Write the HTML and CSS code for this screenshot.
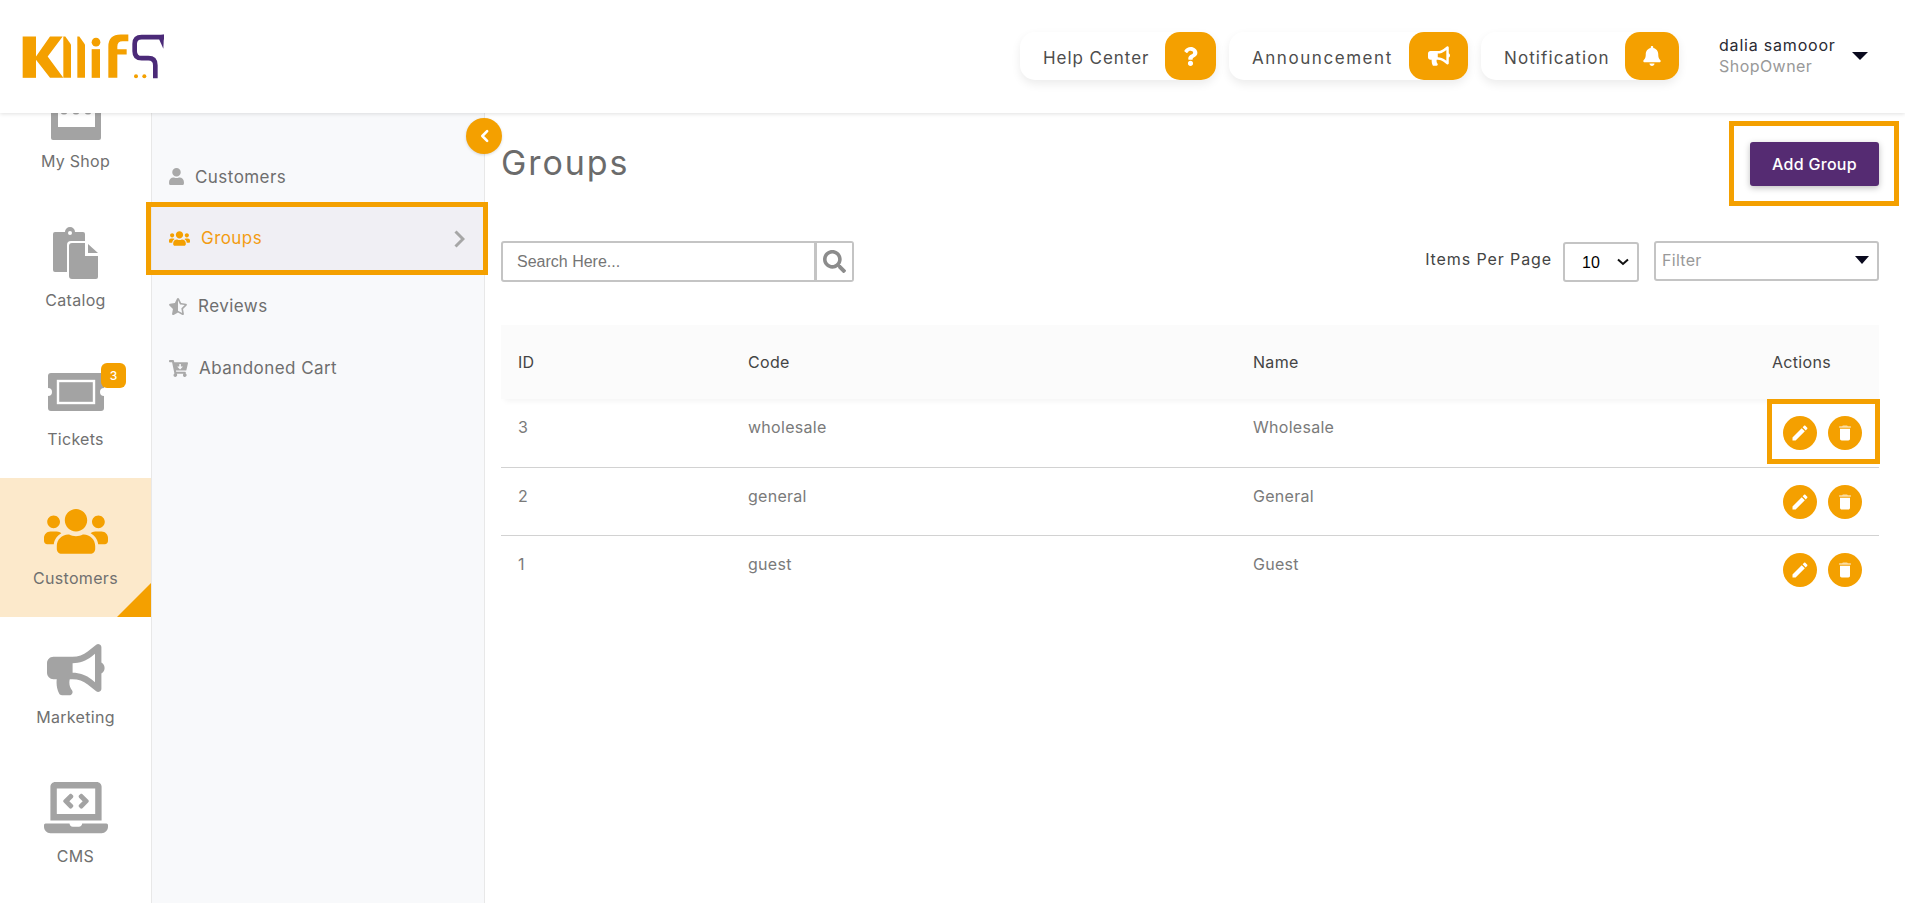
FILE: index.html
```html
<!DOCTYPE html>
<html lang="en">
<head>
<meta charset="utf-8">
<title>Groups</title>
<link rel="stylesheet" href="styles.css">
</head>
<body>
<div class="app">
  <header class="topbar">
    <svg class="logo" viewBox="60 79.5 480 180" aria-label="Klilf5 logo">
      <g fill="#f4a000">
        <rect x="68" y="108" width="40" height="124"/>
        <polygon points="108,168 150,108 188,108 143,168 190,232 150,232 108,178"/>
        <polygon points="190,108 196,108 213,132 213,232 190,232"/>
        <polygon points="232,108 238,108 255,132 255,232 232,232"/>
        <circle cx="288" cy="125" r="13"/>
        <rect x="275" y="146" width="25" height="86"/>
        <path d="M325 232V138Q325 102 362 102H385V122H368Q352 122 352 138V146H380V162H352V232Z"/>
        <circle cx="408" cy="227" r="6"/>
        <circle cx="433" cy="227" r="6"/>
      </g>
      <path d="M492 110H425Q404 110 404 130V152Q404 173 425 173H445Q466 173 466 194V233" fill="none" stroke="#4b2a78" stroke-width="14"/>
      <polygon points="478,104 492,102 490,145 478,118" fill="#4b2a78"/>
    </svg>
    <nav class="top-actions">
      <a class="pill pill-help"><span>Help Center</span><i class="pill-icon"><svg viewBox="0 0 384 512"><path d="M202.021 0C122.202 0 70.503 32.703 29.914 91.026c-7.363 10.58-5.093 25.086 5.178 32.874l43.138 32.709c10.373 7.865 25.132 6.026 33.253-4.148 25.049-31.381 43.63-49.449 82.757-49.449 30.764 0 68.816 19.799 68.816 49.631 0 22.552-18.617 34.134-48.993 51.164-35.423 19.86-82.299 44.576-82.299 106.405V320c0 13.255 10.745 24 24 24h72.471c13.255 0 24-10.745 24-24v-5.773c0-42.86 125.268-44.645 125.268-160.627C377.504 66.256 286.902 0 202.021 0zM192 373.459c-38.196 0-69.271 31.075-69.271 69.271 0 38.195 31.075 69.27 69.271 69.27s69.271-31.075 69.271-69.271-31.075-69.27-69.271-69.27z"/></svg></i></a>
      <a class="pill pill-ann"><span>Announcement</span><i class="pill-icon"><svg viewBox="0 0 576 512"><path d="M576 240c0-23.63-12.95-44.04-32-55.12V32.01C544 23.26 537.02 0 512 0c-7.12 0-14.19 2.38-19.98 7.02l-85.03 68.03C364.28 109.19 310.66 128 256 128H64c-35.35 0-64 28.65-64 64v96c0 35.35 28.65 64 64 64h33.7c-1.39 10.48-2.18 21.14-2.18 32 0 39.77 9.26 77.35 25.56 110.94 5.19 10.69 16.52 17.06 28.4 17.06h74.28c26.05 0 41.69-29.84 25.9-50.56-16.4-21.52-26.15-48.36-26.15-77.44 0-11.11 1.62-21.79 4.41-32H256c54.66 0 108.28 18.81 150.98 52.95l85.03 68.03a32.023 32.023 0 0 0 19.98 7.02c24.92 0 32-22.78 32-32V295.13C563.05 284.04 576 263.63 576 240zm-96 141.42l-33.05-26.44C392.95 311.78 325.12 288 256 288v-96c69.12 0 136.95-23.78 190.95-66.98L480 98.58v282.84z"/></svg></i></a>
      <a class="pill pill-note"><span>Notification</span><i class="pill-icon"><svg viewBox="0 0 448 512"><path d="M224 512c35.32 0 63.97-28.65 63.97-64H160.03c0 35.35 28.65 64 63.97 64zm215.39-149.71c-19.32-20.76-55.47-51.99-55.47-154.29 0-77.7-54.48-139.9-127.94-155.16V32c0-17.67-14.32-32-31.98-32s-31.98 14.33-31.98 32v20.84C118.56 68.1 64.08 130.3 64.08 208c0 102.3-36.15 133.53-55.47 154.29-6 6.45-8.66 14.16-8.61 21.71.11 16.4 12.98 32 32.1 32h383.8c19.12 0 32-15.6 32.1-32 .05-7.55-2.61-15.27-8.61-21.71z"/></svg></i></a>
      <div class="user">
        <div class="user-text"><div class="user-name">dalia samooor</div><div class="user-role">ShopOwner</div></div>
        <span class="caret"></span>
      </div>
    </nav>
  </header>

  <div class="body-row">
    <aside class="rail">
      <ul class="rail-list">
        <li class="rail-item">
          <svg class="rail-icon" viewBox="0 0 64 64"><path d="M7 28h50v28a2 2 0 0 1-2 2H9a2 2 0 0 1-2-2z"/><rect x="14" y="20" width="37" height="25" fill="#fff"/><g><circle cx="10" cy="29" r="3.6"/><circle cx="20" cy="29" r="3.6"/><circle cx="32" cy="29" r="3.6"/><circle cx="44" cy="29" r="3.6"/><circle cx="54" cy="29" r="3.6"/></g></svg>
          <span class="rail-label">My Shop</span>
        </li>
        <li class="rail-item">
          <svg class="rail-icon" viewBox="0 0 64 64"><path d="M11 11h10a5 5 0 0 1 10 0h8a2 2 0 0 1 2 2v38H11a2 2 0 0 1-2-2V13a2 2 0 0 1 2-2z"/><circle cx="26" cy="12" r="2" fill="#fff"/><path d="M27 20h17l12 12v28H27a4 4 0 0 1-4-4V24a4 4 0 0 1 4-4z" fill="#fff"/><path d="M28 22h13v13h13v21a2 2 0 0 1-2 2H28a3 3 0 0 1-3-3V25a3 3 0 0 1 3-3z"/><path d="M44 23l10 9H44z"/></svg>
          <span class="rail-label">Catalog</span>
        </li>
        <li class="rail-item">
          <svg class="rail-icon" viewBox="0 0 64 64"><path d="M7 13h50a3 3 0 0 1 3 3v12a4 4 0 0 0 0 8v12a3 3 0 0 1-3 3H7a3 3 0 0 1-3-3V36a4 4 0 0 0 0-8V16a3 3 0 0 1 3-3z"/><rect x="14" y="21" width="36" height="22" fill="none" stroke="#fff" stroke-width="2.4"/></svg>
          <span class="rail-label">Tickets</span>
          <b class="rail-badge">3</b>
        </li>
        <li class="rail-item is-active">
          <svg class="rail-icon" viewBox="0 -68 640 640"><path d="M96 224c35.3 0 64-28.7 64-64s-28.7-64-64-64-64 28.7-64 64 28.7 64 64 64zm448 0c35.3 0 64-28.7 64-64s-28.7-64-64-64-64 28.7-64 64 28.7 64 64 64zm32 32h-64c-17.6 0-33.5 7.1-45.1 18.6 40.3 22.1 68.9 62 75.1 109.4h66c17.7 0 32-14.3 32-32v-32c0-35.3-28.7-64-64-64zm-256 0c61.9 0 112-50.1 112-112S381.9 32 320 32 208 82.1 208 144s50.1 112 112 112zm76.8 32h-8.3c-20.8 10-43.9 16-68.5 16s-47.6-6-68.5-16h-8.3C179.6 288 128 339.6 128 403.2V432c0 26.5 21.5 48 48 48h288c26.5 0 48-21.5 48-48v-28.8c0-63.6-51.6-115.2-115.2-115.2zm-223.7-13.4C161.5 263.1 145.6 256 128 256H64c-35.3 0-64 28.7-64 64v32c0 17.7 14.3 32 32 32h65.9c6.3-47.4 34.9-87.3 75.2-109.4z"/></svg>
          <span class="rail-label">Customers</span>
        </li>
        <li class="rail-item">
          <svg class="rail-icon" viewBox="-30 -60 640 640"><path d="M576 240c0-23.63-12.95-44.04-32-55.12V32.01C544 23.26 537.02 0 512 0c-7.12 0-14.19 2.38-19.98 7.02l-85.03 68.03C364.28 109.19 310.66 128 256 128H64c-35.35 0-64 28.65-64 64v96c0 35.35 28.65 64 64 64h33.7c-1.39 10.48-2.18 21.14-2.18 32 0 39.77 9.26 77.35 25.56 110.94 5.19 10.69 16.52 17.06 28.4 17.06h74.28c26.05 0 41.69-29.84 25.9-50.56-16.4-21.52-26.15-48.36-26.15-77.44 0-11.11 1.62-21.79 4.41-32H256c54.66 0 108.28 18.81 150.98 52.95l85.03 68.03a32.023 32.023 0 0 0 19.98 7.02c24.92 0 32-22.78 32-32V295.13C563.05 284.04 576 263.63 576 240zm-96 141.42l-33.05-26.44C392.95 311.78 325.12 288 256 288v-96c69.12 0 136.95-23.78 190.95-66.98L480 98.58v282.84z"/></svg>
          <span class="rail-label">Marketing</span>
        </li>
        <li class="rail-item">
          <svg class="rail-icon" viewBox="0 -50 640 640"><path d="M255.03 261.65c6.25 6.25 16.38 6.25 22.63 0l11.31-11.31c6.25-6.25 6.25-16.38 0-22.63L253.25 192l35.71-35.72c6.25-6.25 6.25-16.38 0-22.63l-11.31-11.31c-6.25-6.25-16.38-6.25-22.63 0l-58.34 58.34c-6.25 6.25-6.25 16.38 0 22.63l58.35 58.34zm96.01-11.3l11.31 11.31c6.25 6.25 16.38 6.25 22.63 0l58.34-58.34c6.25-6.25 6.25-16.38 0-22.63l-58.34-58.34c-6.25-6.25-16.38-6.25-22.63 0l-11.31 11.31c-6.25 6.25-6.25 16.38 0 22.63L386.75 192l-35.71 35.72c-6.25 6.25-6.25 16.38 0 22.63zM624 416H381.54c-.74 19.81-14.71 32-32.74 32H288c-18.69 0-33.02-17.47-32.77-32H16c-8.8 0-16 7.2-16 16v16c0 35.2 28.8 64 64 64h512c35.2 0 64-28.8 64-64v-16c0-8.8-7.2-16-16-16zM576 48c0-26.4-21.6-48-48-48H112C85.6 0 64 21.6 64 48v336h512V48zm-64 272H128V64h384v256z"/></svg>
          <span class="rail-label">CMS</span>
        </li>
      </ul>
    </aside>

    <aside class="subnav">
      <button class="collapse" type="button" aria-label="Collapse"><svg viewBox="0 0 12 16"><path d="M9 2.5 3.5 8 9 13.5" fill="none" stroke="#fff" stroke-width="3" stroke-linecap="round" stroke-linejoin="round"/></svg></button>
      <ul class="subnav-list">
        <li class="sub-item sub-customers">
          <svg class="sub-icon ic-user" viewBox="0 0 448 512"><path d="M224 256c70.7 0 128-57.3 128-128S294.7 0 224 0 96 57.3 96 128s57.3 128 128 128zm89.6 32h-16.7c-22.2 10.2-46.9 16-72.9 16s-50.6-5.8-72.9-16h-16.7C60.2 288 0 348.2 0 422.4V464c0 26.5 21.5 48 48 48h352c26.5 0 48-21.5 48-48v-41.6c0-74.2-60.2-134.4-134.4-134.4z"/></svg>
          <span>Customers</span>
        </li>
        <li class="sub-item sub-groups">
          <svg class="sub-icon ic-users" viewBox="0 32 640 448"><path d="M96 224c35.3 0 64-28.7 64-64s-28.7-64-64-64-64 28.7-64 64 28.7 64 64 64zm448 0c35.3 0 64-28.7 64-64s-28.7-64-64-64-64 28.7-64 64 28.7 64 64 64zm32 32h-64c-17.6 0-33.5 7.1-45.1 18.6 40.3 22.1 68.9 62 75.1 109.4h66c17.7 0 32-14.3 32-32v-32c0-35.3-28.7-64-64-64zm-256 0c61.9 0 112-50.1 112-112S381.9 32 320 32 208 82.1 208 144s50.1 112 112 112zm76.8 32h-8.3c-20.8 10-43.9 16-68.5 16s-47.6-6-68.5-16h-8.3C179.6 288 128 339.6 128 403.2V432c0 26.5 21.5 48 48 48h288c26.5 0 48-21.5 48-48v-28.8c0-63.6-51.6-115.2-115.2-115.2zm-223.7-13.4C161.5 263.1 145.6 256 128 256H64c-35.3 0-64 28.7-64 64v32c0 17.7 14.3 32 32 32h65.9c6.3-47.4 34.9-87.3 75.2-109.4z"/></svg>
          <span>Groups</span>
          <svg class="sub-chevron" viewBox="0 0 11 18"><path d="M1.5 1.5 9 9l-7.5 7.5" fill="none" stroke="#a6a6a6" stroke-width="3"/></svg>
        </li>
        <li class="sub-item sub-reviews">
          <svg class="sub-icon ic-star" viewBox="0 0 536 512"><path d="M508.55 171.51L362.18 150.2 296.77 17.81C290.89 5.98 279.42 0 267.95 0c-11.4 0-22.79 5.9-28.69 17.81l-65.43 132.38-146.38 21.29c-26.25 3.8-36.77 36.09-17.74 54.59l105.89 103-25.06 145.48C86.98 495.33 103.57 512 122.15 512c4.93 0 10-1.17 14.87-3.75l130.95-68.68 130.94 68.7c4.86 2.55 9.92 3.71 14.83 3.71 18.6 0 35.22-16.61 31.66-37.4l-25.03-145.49 105.91-102.98c19.04-18.5 8.52-50.8-17.73-54.6zm-121.74 123.2l-18.12 17.62 4.28 24.88 19.52 113.45-102.13-53.59-22.38-11.74.03-317.19 51.03 103.29 11.18 22.63 25.01 3.64 114.23 16.63-82.65 80.38z"/></svg>
          <span>Reviews</span>
        </li>
        <li class="sub-item sub-cart">
          <svg class="sub-icon ic-cart" viewBox="0 0 576 512"><path d="M504.717 320H211.572l6.545 32h268.418c15.401 0 26.816 14.301 23.403 29.319l-5.517 24.276C523.112 414.668 536 433.828 536 456c0 31.202-25.519 56.444-56.824 55.994-29.823-.429-54.35-24.631-55.155-54.447-.44-16.287 6.085-31.049 16.803-41.548H231.176c10.378 10.166 16.824 24.333 16.824 40 0 31.81-26.528 57.42-58.67 55.938-28.54-1.314-51.751-24.374-53.251-52.904-1.158-22.031 10.436-41.434 28.051-51.564L93.412 64H24C10.745 64 0 53.255 0 40V24C0 10.745 10.745 0 24 0h102.529c11.401 0 21.228 8.021 23.513 19.19L159.208 64H551.99c15.401 0 26.816 14.301 23.403 29.319l-47.273 208C525.637 312.246 515.923 320 504.717 320zM403.029 192H360v-60c0-6.627-5.373-12-12-12h-24c-6.627 0-12 5.373-12 12v60h-43.029c-10.691 0-16.045 12.926-8.485 20.485l67.029 67.029c4.686 4.686 12.284 4.686 16.971 0l67.029-67.029c7.559-7.559 2.205-20.485-8.486-20.485z"/></svg>
          <span>Abandoned Cart</span>
        </li>
      </ul>
    </aside>

    <main class="content">
      <div class="title-row">
        <h1 class="page-title">Groups</h1>
        <button class="add-btn" type="button">Add Group</button>
      </div>

      <div class="toolbar">
        <form class="search">
          <input class="search-input" type="text" placeholder="Search Here...">
          <button class="search-btn" type="button" aria-label="Search"><svg viewBox="0 0 512 512"><path d="M505 442.7L405.3 343c-4.5-4.5-10.6-7-17-7H372c27.6-35.3 44-79.7 44-128C416 93.1 322.9 0 208 0S0 93.1 0 208s93.1 208 208 208c48.3 0 92.7-16.4 128-44v16.3c0 6.4 2.5 12.5 7 17l99.7 99.7c9.4 9.4 24.6 9.4 33.9 0l28.3-28.3c9.4-9.4 9.4-24.6.1-34zM208 336c-70.7 0-128-57.2-128-128 0-70.7 57.2-128 128-128 70.7 0 128 57.2 128 128 0 70.7-57.2 128-128 128z"/></svg></button>
        </form>
        <div class="filters">
          <label class="per-page-label">Items Per Page</label>
          <div class="per-page-wrap">
            <select class="per-page"><option>10</option><option>25</option><option>50</option></select>
            <svg class="per-page-chevron" viewBox="0 0 12 8"><path d="M1 1.5 6 6l5-4.5" fill="none" stroke="#111" stroke-width="2"/></svg>
          </div>
          <div class="filter"><span>Filter</span><i class="filter-caret"></i></div>
        </div>
      </div>

      <table class="grid">
        <thead>
          <tr><th class="col-id">ID</th><th class="col-code">Code</th><th class="col-name">Name</th><th class="col-actions">Actions</th></tr>
        </thead>
        <tbody>
          <tr class="row-first">
            <td>3</td><td>wholesale</td><td>Wholesale</td>
            <td class="cell-actions"><div class="actions is-marked">
              <button class="round" type="button" aria-label="Edit"><svg viewBox="0 0 24 24"><path d="M3 17.25V21h3.75L17.81 9.94l-3.75-3.75L3 17.25zM20.71 7.04c.39-.39.39-1.02 0-1.41l-2.34-2.34c-.39-.39-1.02-.39-1.41 0l-1.83 1.83 3.75 3.75 1.83-1.83z"/></svg></button>
              <button class="round" type="button" aria-label="Delete"><svg viewBox="0 0 24 24"><path d="M6 19c0 1.1.9 2 2 2h8c1.1 0 2-.9 2-2V7H6v12z"/><path d="M19 4h-3.5l-1-1h-5l-1 1H5v1.6h14z" opacity=".65"/></svg></button>
            </div></td>
          </tr>
          <tr>
            <td>2</td><td>general</td><td>General</td>
            <td class="cell-actions"><div class="actions">
              <button class="round" type="button" aria-label="Edit"><svg viewBox="0 0 24 24"><path d="M3 17.25V21h3.75L17.81 9.94l-3.75-3.75L3 17.25zM20.71 7.04c.39-.39.39-1.02 0-1.41l-2.34-2.34c-.39-.39-1.02-.39-1.41 0l-1.83 1.83 3.75 3.75 1.83-1.83z"/></svg></button>
              <button class="round" type="button" aria-label="Delete"><svg viewBox="0 0 24 24"><path d="M6 19c0 1.1.9 2 2 2h8c1.1 0 2-.9 2-2V7H6v12z"/><path d="M19 4h-3.5l-1-1h-5l-1 1H5v1.6h14z" opacity=".65"/></svg></button>
            </div></td>
          </tr>
          <tr>
            <td>1</td><td>guest</td><td>Guest</td>
            <td class="cell-actions"><div class="actions">
              <button class="round" type="button" aria-label="Edit"><svg viewBox="0 0 24 24"><path d="M3 17.25V21h3.75L17.81 9.94l-3.75-3.75L3 17.25zM20.71 7.04c.39-.39.39-1.02 0-1.41l-2.34-2.34c-.39-.39-1.02-.39-1.41 0l-1.83 1.83 3.75 3.75 1.83-1.83z"/></svg></button>
              <button class="round" type="button" aria-label="Delete"><svg viewBox="0 0 24 24"><path d="M6 19c0 1.1.9 2 2 2h8c1.1 0 2-.9 2-2V7H6v12z"/><path d="M19 4h-3.5l-1-1h-5l-1 1H5v1.6h14z" opacity=".65"/></svg></button>
            </div></td>
          </tr>
        </tbody>
      </table>
    </main>
  </div>
</div>
</body>
</html>
```

FILE: styles.css
```css
* { box-sizing: border-box; }
html, body { margin: 0; height: 100%; }
body {
  font-family: "Inter", "Liberation Sans", sans-serif;
  background: #fff;
  color: #666;
  overflow: hidden;
}
ul { list-style: none; margin: 0; padding: 0; }
button { font-family: inherit; }

.app { display: flex; flex-direction: column; height: 100vh; }

/* top bar */
.topbar {
  position: relative;
  z-index: 5;
  flex: 0 0 113px;
  display: flex;
  align-items: center;
  justify-content: space-between;
  padding: 0 37px 0 20px;
  background: #fff;
  box-shadow: 0 1px 4px rgba(0, 0, 0, .12);
}
.logo { width: 160px; height: 60px; display: block; }
.top-actions { display: flex; align-items: center; gap: 13px; margin-top: -1px; }
.pill {
  display: flex;
  align-items: center;
  justify-content: space-between;
  height: 48px;
  padding-left: 23px;
  border-radius: 15px;
  background: #fff;
  box-shadow: 0 4px 10px rgba(0, 0, 0, .08);
  font-size: 17px;
  color: #4d4d4d;
}
.pill > span { padding-top: 3px; }
.pill-help { width: 196px; letter-spacing: .95px; }
.pill-ann { width: 239px; letter-spacing: 1.55px; }
.pill-note { width: 198px; letter-spacing: 1.1px; }
.pill-icon {
  display: flex;
  align-items: center;
  justify-content: center;
  height: 48px;
  border-radius: 15px;
  background: #f4a000;
}
.pill-help .pill-icon { width: 51px; }
.pill-ann .pill-icon { width: 59px; }
.pill-note .pill-icon { width: 54px; }
.pill-icon svg { fill: #fff; display: block; }
.pill-help svg { width: 15px; height: 19px; }
.pill-ann svg { width: 22px; height: 20px; }
.pill-note svg { width: 18px; height: 20px; }

.user { display: flex; align-items: center; width: 149px; margin-left: 27px; }
.user-text { width: 133px; font-size: 16px; line-height: 21px; }
.user-name { color: #2a2a33; letter-spacing: .8px; }
.user-role { color: #999; letter-spacing: .45px; }
.caret {
  width: 0;
  height: 0;
  border-left: 8px solid transparent;
  border-right: 8px solid transparent;
  border-top: 8px solid #0a0a1e;
}

/* layout below the top bar */
.body-row { flex: 1; display: flex; min-height: 0; }

/* icon rail */
.rail {
  flex: 0 0 152px;
  overflow: hidden;
  border-right: 1px solid #e8e8e8;
  background: #fff;
}
.rail-list { margin-top: -52px; }
.rail-item {
  position: relative;
  display: flex;
  flex-direction: column;
  align-items: center;
  height: 139px;
  padding-top: 21px;
}
.rail-icon { width: 64px; height: 64px; display: block; fill: #a3a3a3; flex: none; }
.rail-label {
  font-size: 16px;
  line-height: 30px;
  letter-spacing: .3px;
  color: #707070;
}
.rail-badge {
  position: absolute;
  left: 101px;
  top: 24px;
  width: 25px;
  height: 25px;
  border-radius: 6px;
  background: #f4a000;
  color: #fff;
  font-size: 12px;
  font-weight: 500;
  line-height: 25px;
  text-align: center;
}
.rail-item.is-active { background: #fce9cb; }
.rail-item.is-active .rail-icon { fill: #f4a000; }
.rail-item.is-active::after {
  content: "";
  position: absolute;
  right: 0;
  bottom: 0;
  width: 34px;
  height: 34px;
  background: #f4a000;
  clip-path: polygon(100% 0, 100% 100%, 0 100%);
}

/* sub navigation */
.subnav {
  position: relative;
  flex: 0 0 333px;
  background: #f8f9fb;
  border-right: 1px solid #e8e8e8;
}
.collapse {
  position: absolute;
  z-index: 3;
  top: 5px;
  right: -18px;
  display: flex;
  align-items: center;
  justify-content: center;
  width: 36px;
  height: 36px;
  padding: 0;
  border: 0;
  border-radius: 50%;
  background: #f4a000;
  box-shadow: 0 1px 3px rgba(0, 0, 0, .15);
}
.collapse svg { width: 11px; height: 14px; display: block; }
.subnav-list { padding-top: 33px; }
.sub-item {
  position: relative;
  display: flex;
  align-items: center;
  gap: 11px;
  height: 62px;
  padding-left: 17px;
  font-size: 17px;
  letter-spacing: .45px;
  color: #6e6e6e;
}
.sub-customers { height: 61px; }
.sub-icon { display: block; fill: #a9a9a9; flex: none; }
.ic-user { width: 15px; height: 17px; }
.ic-users { width: 21px; height: 15px; }
.ic-star { width: 18px; height: 17px; }
.ic-cart { width: 19px; height: 17px; }
.sub-groups {
  height: 63px;
  margin-bottom: 5px;
  background: #f0eff4;
  color: #f39c12;
}
.sub-groups > span { margin-top: -2px; }
.sub-groups .sub-icon { fill: #f4a000; }
.sub-groups::after {
  content: "";
  position: absolute;
  inset: -5px -4px -5px -6px;
  border: 5px solid #f4a000;
  pointer-events: none;
  z-index: 2;
}
.sub-chevron { width: 11px; height: 18px; display: block; margin-left: auto; margin-right: 19px; }

/* main content */
.content { flex: 1; min-width: 0; padding: 29px 26px 0 16px; }
.title-row { display: flex; align-items: center; justify-content: space-between; height: 44px; }
.page-title {
  margin: 0 0 2px;
  font-size: 34px;
  line-height: 40px;
  font-weight: 400;
  letter-spacing: 1.9px;
  color: #6b6b6b;
}
.add-btn {
  position: relative;
  width: 129px;
  height: 44px;
  border: 0;
  border-radius: 3px;
  background: #552b72;
  box-shadow: 0 2px 6px rgba(0, 0, 0, .25);
  color: #fff;
  font-size: 16px;
  font-weight: 500;
  letter-spacing: .3px;
}
.add-btn::after {
  content: "";
  position: absolute;
  inset: -21px -20px -20px -21px;
  border: 5px solid #f4a000;
  pointer-events: none;
}

.toolbar { display: flex; align-items: flex-start; justify-content: space-between; margin-top: 55px; }
.search {
  display: flex;
  width: 353px;
  height: 41px;
  margin: 0;
  border: 2px solid #c4c4c4;
  border-radius: 3px;
}
.search-input {
  flex: 1;
  min-width: 0;
  border: 0;
  outline: 0;
  padding: 0 14px;
  font-family: "Liberation Sans", sans-serif;
  font-size: 16px;
  background: transparent;
}
.search-input::placeholder { color: #757575; opacity: 1; }
.search-btn {
  display: flex;
  align-items: center;
  justify-content: center;
  width: 38px;
  padding: 0;
  border: 0;
  border-left: 3px solid #c4c4c4;
  background: #fff;
}
.search-btn svg { width: 23px; height: 23px; fill: #8c8c8c; display: block; }

.filters { display: flex; align-items: flex-start; }
.per-page-label { margin: 8px 11px 0 0; font-size: 16px; line-height: 20px; letter-spacing: .9px; color: #444; }
.per-page-wrap { position: relative; width: 76px; height: 40px; margin: 1px 15px 0 0; }
.per-page {
  appearance: none;
  width: 100%;
  height: 100%;
  padding: 0 0 0 17px;
  border: 2px solid #c4c4c4;
  border-radius: 3px;
  background: #fff;
  color: #000;
  font-family: "Liberation Sans", sans-serif;
  font-size: 16px;
}
.per-page-chevron {
  position: absolute;
  right: 10px;
  top: 16px;
  width: 12px;
  height: 8px;
  pointer-events: none;
}
.filter {
  display: flex;
  align-items: center;
  justify-content: space-between;
  width: 225px;
  height: 40px;
  padding: 0 8px 2px 6px;
  border: 2px solid #c4c4c4;
  border-radius: 3px;
  font-size: 16px;
  letter-spacing: .3px;
  color: #999;
}
.filter-caret {
  width: 0;
  height: 0;
  border-left: 7.5px solid transparent;
  border-right: 7.5px solid transparent;
  border-top: 8px solid #0a0a1e;
}

/* table */
.grid { width: 1378px; margin-top: 43px; border-collapse: separate; border-spacing: 0; table-layout: fixed; }
.grid thead tr { box-shadow: 0 6px 6px -4px rgba(0, 0, 0, .05); }
.grid th {
  height: 74px;
  padding: 0 0 0 17px;
  background: #fbfbfb;
  font-size: 16px;
  font-weight: 400;
  letter-spacing: .3px;
  color: #444;
  text-align: left;
}
.col-id { width: 230px; }
.col-code { width: 505px; }
.col-name { width: 519px; }
.col-actions { width: 124px; }
.grid td {
  height: 68px;
  padding: 16px 0 0 17px;
  vertical-align: top;
  font-size: 16px;
  line-height: 24px;
  letter-spacing: .28px;
  color: #7a7a7a;
  border-bottom: 1px solid #d2d2d2;
}
.grid .row-first td { height: 69px; }
.grid tbody tr:last-child td { border-bottom: 0; }
.grid td.cell-actions { padding: 17px 0 0 28px; }
.actions { position: relative; display: flex; gap: 11px; width: 79px; }
.actions.is-marked::after {
  content: "";
  position: absolute;
  inset: -17px -18px -14px -16px;
  border: 5px solid #f4a000;
  pointer-events: none;
}
.round {
  display: flex;
  align-items: center;
  justify-content: center;
  width: 34px;
  height: 34px;
  padding: 0;
  border: 0;
  border-radius: 50%;
  background: #f4a000;
}
.round svg { width: 20px; height: 20px; fill: #fff; display: block; }
```
